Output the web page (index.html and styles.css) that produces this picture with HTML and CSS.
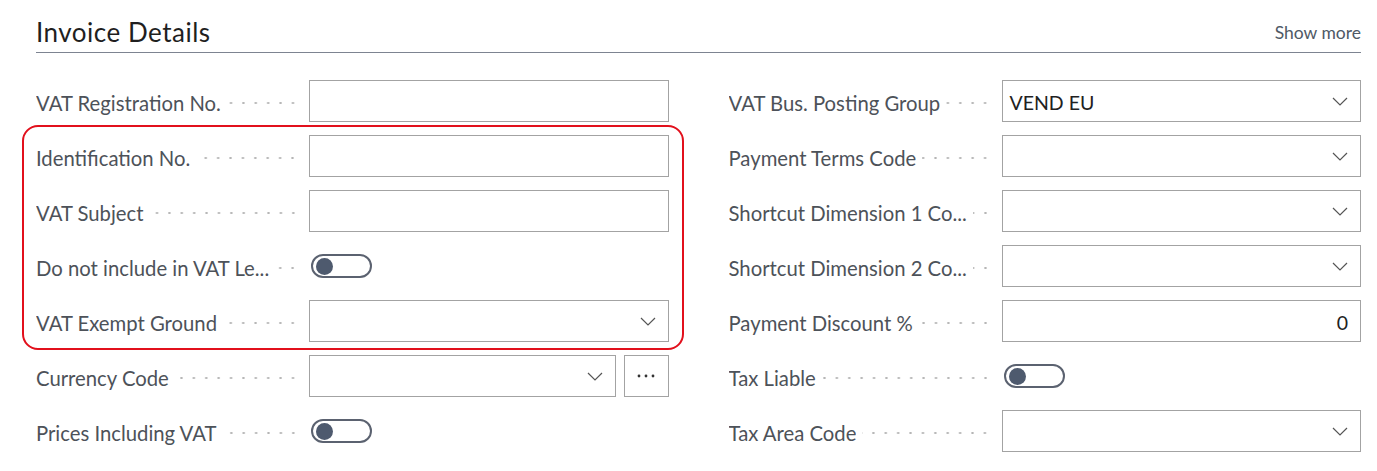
FILE: index.html
```html
<!DOCTYPE html>
<html lang="en">
<head>
<meta charset="utf-8">
<title>Invoice Details</title>
<link rel="stylesheet" href="styles.css">
</head>
<body>
<section class="section">
  <header class="header">
    <h2 class="title">Invoice Details</h2>
    <a class="more">Show more</a>
  </header>
  <div class="columns">
    <div class="col col-left">
      <div class="field">
        <div class="caption"><span class="label">VAT Registration No.</span><span class="leader"></span></div>
        <div class="input"></div>
      </div>
      <div class="field">
        <div class="caption"><span class="label">Identification No.</span><span class="leader"></span></div>
        <div class="input"></div>
      </div>
      <div class="field">
        <div class="caption"><span class="label">VAT Subject</span><span class="leader"></span></div>
        <div class="input"></div>
      </div>
      <div class="field">
        <div class="caption"><span class="label">Do not include in VAT Le...</span><span class="leader"></span></div>
        <div class="toggle-wrap"><span class="toggle"><span class="thumb"></span></span></div>
      </div>
      <div class="field">
        <div class="caption"><span class="label">VAT Exempt Ground</span><span class="leader"></span></div>
        <div class="input select"><svg class="chev" viewBox="0 0 16 9" width="16" height="9"><path d="M1 1 L8 8 L15 1"/></svg></div>
      </div>
      <div class="field">
        <div class="caption"><span class="label">Currency Code</span><span class="leader"></span></div>
        <div class="combo">
          <div class="input select"><svg class="chev" viewBox="0 0 16 9" width="16" height="9"><path d="M1 1 L8 8 L15 1"/></svg></div>
          <div class="assist"><svg viewBox="0 0 20 4" width="20" height="4"><circle cx="3" cy="2" r="1.4"/><circle cx="10" cy="2" r="1.4"/><circle cx="17" cy="2" r="1.4"/></svg></div>
        </div>
      </div>
      <div class="field">
        <div class="caption"><span class="label">Prices Including VAT</span><span class="leader"></span></div>
        <div class="toggle-wrap"><span class="toggle"><span class="thumb"></span></span></div>
      </div>
      <div class="highlight"></div>
    </div>
    <div class="col">
      <div class="field">
        <div class="caption"><span class="label">VAT Bus. Posting Group</span><span class="leader"></span></div>
        <div class="input select"><span class="value">VEND EU</span><svg class="chev" viewBox="0 0 16 9" width="16" height="9"><path d="M1 1 L8 8 L15 1"/></svg></div>
      </div>
      <div class="field">
        <div class="caption"><span class="label">Payment Terms Code</span><span class="leader"></span></div>
        <div class="input select"><svg class="chev" viewBox="0 0 16 9" width="16" height="9"><path d="M1 1 L8 8 L15 1"/></svg></div>
      </div>
      <div class="field">
        <div class="caption"><span class="label">Shortcut Dimension 1 Co...</span><span class="leader"></span></div>
        <div class="input select"><svg class="chev" viewBox="0 0 16 9" width="16" height="9"><path d="M1 1 L8 8 L15 1"/></svg></div>
      </div>
      <div class="field">
        <div class="caption"><span class="label">Shortcut Dimension 2 Co...</span><span class="leader"></span></div>
        <div class="input select"><svg class="chev" viewBox="0 0 16 9" width="16" height="9"><path d="M1 1 L8 8 L15 1"/></svg></div>
      </div>
      <div class="field">
        <div class="caption"><span class="label">Payment Discount %</span><span class="leader"></span></div>
        <div class="input number"><span class="value">0</span></div>
      </div>
      <div class="field">
        <div class="caption"><span class="label">Tax Liable</span><span class="leader"></span></div>
        <div class="toggle-wrap"><span class="toggle"><span class="thumb"></span></span></div>
      </div>
      <div class="field">
        <div class="caption"><span class="label">Tax Area Code</span><span class="leader"></span></div>
        <div class="input select"><svg class="chev" viewBox="0 0 16 9" width="16" height="9"><path d="M1 1 L8 8 L15 1"/></svg></div>
      </div>
    </div>
  </div>
</section>
</body>
</html>
```
FILE: styles.css
```css
* { box-sizing: border-box; }

html, body {
  margin: 0;
  padding: 0;
  background: #ffffff;
}

body {
  font-family: Lato, "Liberation Sans", sans-serif;
  color: #212121;
}

.section {
  margin: 0 16px 0 36px;
  padding-top: 16px;
}

.header {
  display: flex;
  justify-content: space-between;
  align-items: flex-end;
  border-bottom: 1px solid #7d8491;
  padding-bottom: 4px;
}

.title {
  margin: 0;
  font-size: 26px;
  line-height: 32px;
  font-weight: 400;
  letter-spacing: 0.5px;
  color: #1f1f1f;
}

.more {
  font-size: 17.5px;
  line-height: 22px;
  color: #4f5966;
  margin-bottom: 4px;
}

.columns {
  display: grid;
  grid-template-columns: 1fr 1fr;
  column-gap: 60px;
  padding-top: 27px;
}

.col {
  display: flex;
  flex-direction: column;
  gap: 13px;
}

.col-left {
  position: relative;
}

.field {
  display: grid;
  grid-template-columns: 263px 1fr;
  column-gap: 10px;
  align-items: center;
  height: 42px;
}

.caption {
  display: flex;
  align-items: center;
  min-width: 0;
  padding-top: 3px;
}

.label {
  font-size: 20.3px;
  color: #4d5259;
  white-space: nowrap;
  overflow: hidden;
  text-overflow: ellipsis;
  flex: 0 1 auto;
}

.leader {
  flex: 1 1 auto;
  min-width: 8px;
  height: 4px;
  margin-left: 6px;
  background-image: radial-gradient(circle, #b5b5b5 0.9px, rgba(255,255,255,0) 1.4px);
  background-size: 12.4px 4px;
  background-position: right center;
  background-repeat: repeat-x;
}

.input {
  height: 42px;
  border: 1px solid #a3a3a3;
  background: #fff;
  display: flex;
  align-items: center;
  padding: 0 12px 0 7px;
}

.input .value {
  font-size: 19.5px;
  color: #212121;
  flex: 1;
  padding-top: 2px;
}

.number .value {
  text-align: right;
}

.select {
  justify-content: flex-end;
}

.select .value + .chev {
  margin-left: 8px;
}

.chev {
  flex: 0 0 auto;
}

.chev path {
  fill: none;
  stroke: #555555;
  stroke-width: 1.2;
}

.combo {
  display: flex;
  gap: 8px;
  height: 42px;
}

.combo .input {
  flex: 1;
}

.assist {
  width: 45px;
  height: 42px;
  border: 1px solid #a3a3a3;
  display: flex;
  align-items: center;
  justify-content: center;
}

.assist circle {
  fill: #333333;
}

.toggle-wrap {
  display: flex;
  align-items: center;
  padding-left: 2px;
}

.toggle {
  width: 61px;
  height: 24px;
  border: 2px solid #5b6270;
  border-radius: 12px;
  display: flex;
  align-items: center;
  padding-left: 3px;
}

.thumb {
  width: 17px;
  height: 17px;
  border-radius: 50%;
  background: #4e5a6e;
}

.highlight {
  position: absolute;
  left: -14px;
  top: 45px;
  width: 662px;
  height: 225px;
  border: 2.5px solid #e2101c;
  border-radius: 16px;
  pointer-events: none;
}
```
